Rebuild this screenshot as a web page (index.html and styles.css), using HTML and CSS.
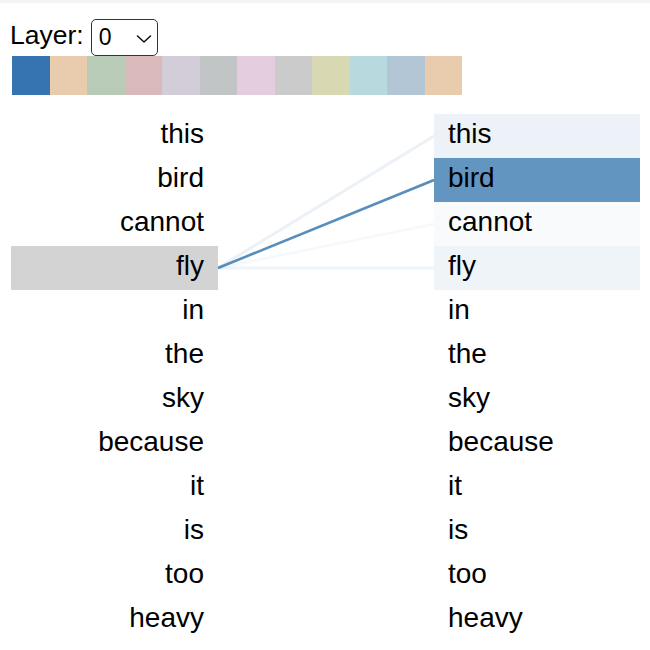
FILE: index.html
```html
<!DOCTYPE html>
<html>
<head>
<meta charset="utf-8">
<link rel="stylesheet" href="styles.css">
</head>
<body>
<div class="topbar"></div>
<div class="controls">
  <span class="label">Layer:</span>
  <div class="select">
    <span class="val">0</span>
    <svg class="chev" width="16" height="8" viewBox="0 0 16 8"><path d="M1.5 1 L8 7 L14.5 1" fill="none" stroke="#111" stroke-width="1.5" stroke-linecap="round" stroke-linejoin="round"/></svg>
  </div>
</div>
<div class="swatches">
  <div class="sw c1"></div><div class="sw c2"></div><div class="sw c3"></div><div class="sw c4"></div>
  <div class="sw c5"></div><div class="sw c6"></div><div class="sw c7"></div><div class="sw c8"></div>
  <div class="sw c9"></div><div class="sw c10"></div><div class="sw c11"></div><div class="sw c12"></div>
</div>
<div class="viz">
  <div class="col left">
    <div class="tok">this</div>
    <div class="tok">bird</div>
    <div class="tok">cannot</div>
    <div class="tok sel">fly</div>
    <div class="tok">in</div>
    <div class="tok">the</div>
    <div class="tok">sky</div>
    <div class="tok">because</div>
    <div class="tok">it</div>
    <div class="tok">is</div>
    <div class="tok">too</div>
    <div class="tok">heavy</div>
  </div>
  <svg class="links" width="216" height="528" viewBox="0 0 216 528">
    <line x1="0" y1="154" x2="216" y2="110" stroke="#4682b4" stroke-opacity="0.05" stroke-width="3"/>
    <line x1="0" y1="154" x2="216" y2="154" stroke="#4682b4" stroke-opacity="0.09" stroke-width="3"/>
    <line x1="0" y1="154" x2="216" y2="22" stroke="#4682b4" stroke-opacity="0.11" stroke-width="3"/>
    <line x1="0" y1="154" x2="216" y2="66" stroke="#4682b4" stroke-opacity="0.9" stroke-width="2.6"/>
  </svg>
  <div class="col right">
    <div class="tok" style="background: rgba(70,130,180,0.1)">this</div>
    <div class="tok" style="background: rgba(70,130,180,0.85)">bird</div>
    <div class="tok" style="background: rgba(70,130,180,0.04)">cannot</div>
    <div class="tok" style="background: rgba(70,130,180,0.09)">fly</div>
    <div class="tok">in</div>
    <div class="tok">the</div>
    <div class="tok">sky</div>
    <div class="tok">because</div>
    <div class="tok">it</div>
    <div class="tok">is</div>
    <div class="tok">too</div>
    <div class="tok">heavy</div>
  </div>
</div>
</body>
</html>
```
FILE: styles.css
```css
html, body {
  margin: 0;
  padding: 0;
  background: #fff;
}
body {
  font-family: "Liberation Sans", Arial, sans-serif;
  color: #000;
  width: 650px;
  height: 650px;
  overflow: hidden;
}
.topbar {
  height: 3px;
  background: #f4f4f4;
}
.controls {
  display: flex;
  align-items: flex-start;
  padding-left: 10px;
  margin-top: 16px;
  height: 37px;
}
.label {
  font-size: 26.5px;
  line-height: 32px;
  padding-bottom: 4px;
  margin-right: 7px;
}
.select {
  box-sizing: border-box;
  width: 67px;
  height: 37px;
  border: 1px solid #333;
  border-radius: 5px;
  display: flex;
  align-items: flex-start;
  padding-left: 7px;
  padding-right: 5px;
  justify-content: space-between;
}
.val {
  font-size: 23px;
  line-height: 34px;
}
.chev {
  display: block;
  margin-top: 15px;
}
.swatches {
  display: flex;
  margin-left: 12px;
  margin-top: 0;
  height: 39px;
}
.sw {
  width: 37.5px;
  height: 39px;
}
.c1 { background: #3574ae; }
.c2 { background: #e9ccae; }
.c3 { background: #b8cbb6; }
.c4 { background: #d9b9b9; }
.c5 { background: #d3cdd9; }
.c6 { background: #c2c5c5; }
.c7 { background: #e5cde0; }
.c8 { background: #cbcbcb; }
.c9 { background: #d8d9b2; }
.c10 { background: #b8dadf; }
.c11 { background: #b3c6d6; }
.c12 { background: #e9ccae; }
.viz {
  display: flex;
  margin-top: 19px;
  padding-left: 11px;
}
.col {
  display: flex;
  flex-direction: column;
}
.left {
  width: 207px;
}
.right {
  width: 206px;
}
.tok {
  height: 44px;
  line-height: 40px;
  font-size: 28px;
  box-sizing: border-box;
}
.left .tok {
  text-align: right;
  padding-right: 14px;
}
.left .tok.sel {
  background: #d3d3d3;
}
.right .tok {
  padding-left: 14px;
}
.links {
  display: block;
  flex: none;
}
```
